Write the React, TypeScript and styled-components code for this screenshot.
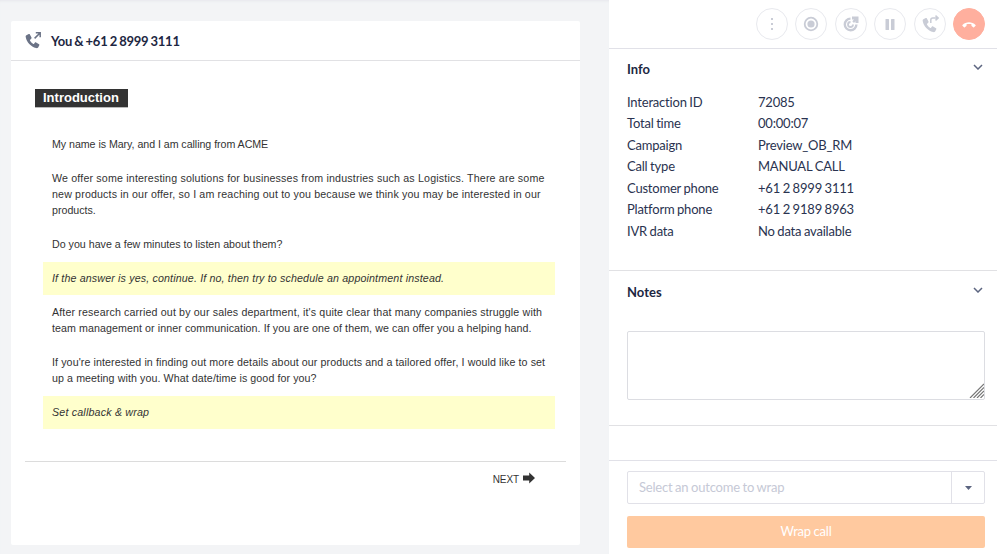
import React from 'react';
import styled, { createGlobalStyle } from 'styled-components';

const GlobalStyle = createGlobalStyle`
  html, body {
    margin: 0;
    padding: 0;
    height: 100%;
    overflow: hidden;
    font-family: Lato, "Liberation Sans", sans-serif;
    background: #f3f4f6;
  }
`;

const infoRows = [
  ['Interaction ID', '72085'],
  ['Total time', '00:00:07'],
  ['Campaign', 'Preview_OB_RM'],
  ['Call type', 'MANUAL CALL'],
  ['Customer phone', '+61 2 8999 3111'],
  ['Platform phone', '+61 2 9189 8963'],
  ['IVR data', 'No data available'],
];

const PhoneIcon = ({ size = 16, color = '#6b7386' }: { size?: number; color?: string }) => (
  <svg width={size} height={size} viewBox="0 0 18 18" fill={color}>
    <path d="M4.2 1.2 1.6 2.4C.9 2.8.6 3.6.8 4.6c1 5.8 5.800 11 11.600 12.400 1 .2 1.900 0 2.400-.8l1.300-2.300c.3-.5.1-1-.3-1.300l-3.300-2c-.5-.3-1-.2-1.300.2l-1 1.300c-.2.3-.5.3-.8.2-1.600-.9-3-2.400-3.800-4-.1-.3 0-.6.2-.8l1.200-1c.4-.3.5-.9.3-1.300L5.500 1.600c-.3-.5-.8-.6-1.300-.4Z" />
  </svg>
);

const Chevron = () => (
  <ChevronMark width="10" height="6" viewBox="0 0 10 6" fill="none" stroke="#5c6580" strokeWidth="1.500">
    <path d="M1 1l4 4 4-4" />
  </ChevronMark>
);

const App: React.FC = () => {
  return (
    <>
      <GlobalStyle />
      <Page>
        <ScriptArea>
          <Card>
            <CardHeader>
              <CallIcon>
                <PhoneIcon />
                <svg width="7" height="7" viewBox="0 0 7 7" fill="none" stroke="#6b7386" strokeWidth="1.500">
                  <path d="M.6 6.400 6 1M1.800.8h4.400v4.400" />
                </svg>
              </CallIcon>
              <CardTitle>You &amp; +61 2 8999 3111</CardTitle>
            </CardHeader>
            <ScriptBody>
              <SectionTag>Introduction</SectionTag>
              <Paragraphs>
                <Line>
                  <Row $tracking={-0.05}>My name is Mary, and I am calling from ACME</Row>
                </Line>
                <Line>
                  <Row $tracking={0.17}>We offer some interesting solutions for businesses from industries such as Logistics. There are some</Row>
                  <Row $tracking={0.15}>new products in our offer, so I am reaching out to you because we think you may be interested in our</Row>
                  <Row>products.</Row>
                </Line>
                <Line>
                  <Row>Do you have a few minutes to listen about them?</Row>
                </Line>
                <Hint>
                  <Row $tracking={0.15}>If the answer is yes, continue. If no, then try to schedule an appointment instead.</Row>
                </Hint>
                <Line>
                  <Row $tracking={0.145}>After research carried out by our sales department, it's quite clear that many companies struggle with</Row>
                  <Row $tracking={0.08}>team management or inner communication. If you are one of them, we can offer you a helping hand.</Row>
                </Line>
                <Line>
                  <Row $tracking={0.1}>If you're interested in finding out more details about our products and a tailored offer, I would like to set</Row>
                  <Row $tracking={0.085}>up a meeting with you. What date/time is good for you?</Row>
                </Line>
                <Hint>
                  <Row $tracking={0.19}>Set callback &amp; wrap</Row>
                </Hint>
              </Paragraphs>
            </ScriptBody>
            <CardFooter>
              <NextLink>
                <NextLabel>NEXT</NextLabel>
                <svg width="12" height="12" viewBox="0 0 12 12" fill="#333">
                  <path d="M0 3.500h6.200V.500L12 6l-5.800 5.500v-3H0Z" />
                </svg>
              </NextLink>
            </CardFooter>
          </Card>
        </ScriptArea>

        <SidePanel>
          <Toolbar>
            <RoundButton>
              <svg width="4" height="14" viewBox="0 0 4 14" fill="#c9ccd6">
                <rect x="1" y="1" width="2" height="2" />
                <rect x="1" y="6" width="2" height="2" />
                <rect x="1" y="11" width="2" height="2" />
              </svg>
            </RoundButton>
            <RoundButton>
              <svg width="16" height="16" viewBox="0 0 16 16" fill="none">
                <circle cx="8" cy="8" r="6.300" stroke="#c9ccd6" strokeWidth="1.800" />
                <circle cx="8" cy="8" r="3.600" fill="#c9ccd6" />
              </svg>
            </RoundButton>
            <RoundButton>
              <svg width="16" height="16" viewBox="0 0 16 16" fill="none">
                <path d="M7.500 2.600A5.800 5.800 0 1 0 13.400 8.500" stroke="#c9ccd6" strokeWidth="2.400" />
                <path d="M7.500 6A2.500 2.500 0 1 0 10 8.500" stroke="#c9ccd6" strokeWidth="1.800" />
                <path d="M9 .5h6.500V7h-3V5.300L11 7 9.300 5.300 11 3.500H9Z" fill="#c9ccd6" />
              </svg>
            </RoundButton>
            <RoundButton>
              <svg width="10" height="11" viewBox="0 0 10 11" fill="#c9ccd6">
                <rect x="0.5" y="0" width="3.500" height="11" rx=".5" />
                <rect x="6" y="0" width="3.500" height="11" rx=".5" />
              </svg>
            </RoundButton>
            <RoundButton>
              <TransferIcon>
                <PhoneIcon size={16} color="#c9ccd6" />
                <svg width="9" height="9" viewBox="0 0 9 9" fill="none" stroke="#c9ccd6" strokeWidth="1.500">
                  <path d="M5.500.6 8.200 3 5.500 5.400M8 3H2.800C1.500 3 .8 3.800.8 5v3" />
                </svg>
              </TransferIcon>
            </RoundButton>
            <HangupButton>
              <svg width="14" height="7" viewBox="0 0 16 8" fill="#fff">
                <path d="M.5 4.500C4.500.5 11.500.5 15.500 4.500c.3.300.3.700 0 1L13.800 7.200c-.3.300-.7.300-1 0L11 5.700c-.2-.2-.2-.4-.2-.6V3.800c-1.800-.6-3.800-.6-5.600 0v1.300c0 .2 0 .4-.2.600L3.200 7.200c-.3.300-.7.300-1 0L.5 5.500c-.3-.3-.3-.7 0-1Z" />
              </svg>
            </HangupButton>
          </Toolbar>

          <InfoSection>
            <SectionHead>
              <SectionTitle>Info</SectionTitle>
              <Chevron />
            </SectionHead>
            <InfoGrid>
              {infoRows.map(([label, value]) => (
                <React.Fragment key={label}>
                  <span>{label}</span>
                  <span>{value}</span>
                </React.Fragment>
              ))}
            </InfoGrid>
          </InfoSection>

          <NotesSection>
            <SectionHead>
              <SectionTitle>Notes</SectionTitle>
              <Chevron />
            </SectionHead>
            <NotesWrap>
              <NotesBox />
              <ResizeGrip width="15" height="15" viewBox="0 0 15 15" stroke="#777" strokeWidth="1.200">
                <path d="M1 15 15 1M4.500 15 15 4.500M8 15l7-7M11.500 15l3.500-3.500" />
              </ResizeGrip>
            </NotesWrap>
          </NotesSection>

          <Spacer />

          <WrapFooter>
            <OutcomeSelect>
              <OutcomeText>Select an outcome to wrap</OutcomeText>
              <OutcomeCaret>
                <svg width="7" height="4" viewBox="0 0 7 4" fill="#5c6580">
                  <path d="M0 0h7L3.500 4Z" />
                </svg>
              </OutcomeCaret>
            </OutcomeSelect>
            <WrapButton>Wrap call</WrapButton>
          </WrapFooter>
        </SidePanel>
      </Page>
    </>
  );
};

export default App;

const Page = styled.div`
  display: flex;
  width: 997px;
  height: 554px;
  background: #f3f4f6;
`;

const ScriptArea = styled.div`
  width: 609px;
  padding: 21px 29px 9px 11px;
  box-sizing: border-box;
  box-shadow: inset 0 3px 3px -2px #e6e7ec;
`;

const Card = styled.div`
  height: 524px;
  background: #fff;
  border-radius: 2px;
  display: flex;
  flex-direction: column;
`;

const CardHeader = styled.div`
  height: 40px;
  box-sizing: border-box;
  display: flex;
  align-items: center;
  padding-left: 14px;
  border-bottom: 1px solid #e1e1e4;
`;

const CallIcon = styled.div`
  position: relative;
  width: 16px;
  height: 16px;
  margin-right: 10px;
  svg {
    display: block;
  }
  svg:last-child {
    position: absolute;
    top: -1px;
    right: 0;
  }
`;

const CardTitle = styled.div`
  font-size: 13px;
  font-weight: 700;
  letter-spacing: -0.25px;
  word-spacing: -0.7px;
  color: #1d2742;
`;

const ScriptBody = styled.div`
  flex: 1;
  padding: 28px 24px 0;
  font-family: "Liberation Sans", Arial, sans-serif;
`;

const SectionTag = styled.div`
  display: block;
  width: fit-content;
  height: 19px;
  padding: 0 9px 0 8px;
  background: #333;
  color: #fff;
  font-size: 13px;
  font-weight: 700;
  line-height: 18px;
  border-bottom: 1px solid #bbb;
  box-sizing: border-box;
  margin-bottom: 28px;
`;

const Paragraphs = styled.div`
  display: flex;
  flex-direction: column;
  gap: 18px;
  margin-left: 8px;
  margin-right: 1px;
`;

const Line = styled.p`
  margin: 0;
  padding: 0 9px;
  font-size: 10.670px;
  line-height: 16px;
  color: #333;
`;

const Row = styled.span<{ $tracking?: number }>`
  display: block;
  white-space: nowrap;
  letter-spacing: ${({ $tracking }) => $tracking ?? 0}px;
`;

const Hint = styled(Line)`
  padding: 8px 9px 9px;
  margin: -8px 0 -9px;
  font-style: italic;
  background: #ffffcc;
`;

const CardFooter = styled.div`
  margin: 0 14px;
  height: 84px;
  box-sizing: border-box;
  padding: 8px 31px 0 0;
  border-top: 1px solid #dcdcdc;
  display: flex;
  justify-content: flex-end;
  align-items: flex-start;
`;

const NextLink = styled.div`
  display: flex;
  align-items: flex-start;
  gap: 4px;
  font-family: "Liberation Sans", Arial, sans-serif;
  font-size: 10px;
  line-height: 14px;
  color: #333;

  svg {
    margin-top: 2px;
  }
`;

const NextLabel = styled.span`
  padding-top: 3px;
  letter-spacing: -0.1px;
`;

const SidePanel = styled.div`
  width: 388px;
  background: #fff;
  display: flex;
  flex-direction: column;
  color: #1d2742;
`;

const Toolbar = styled.div`
  height: 49px;
  box-sizing: border-box;
  border-bottom: 1px solid #e1e1e8;
  display: flex;
  justify-content: flex-end;
  align-items: flex-start;
  padding: 8px 12px 0 0;
  gap: 7.400px;
`;

const RoundButton = styled.div`
  width: 32px;
  height: 32px;
  box-sizing: border-box;
  border: 1px solid #e8e9ee;
  border-radius: 50%;
  display: flex;
  align-items: center;
  justify-content: center;
`;

const HangupButton = styled(RoundButton)`
  background: #ffaf9e;
  border-color: #ffaf9e;
`;

const TransferIcon = styled.div`
  position: relative;
  width: 16px;
  height: 16px;
  top: 1px;
  svg:last-child {
    position: absolute;
    top: -2px;
    right: -1px;
  }
`;

const SectionHead = styled.div`
  display: flex;
  justify-content: space-between;
  align-items: flex-start;
`;

const ChevronMark = styled.svg`
  margin: 3px 2px 0 0;
`;

const SectionTitle = styled.div`
  font-size: 13px;
  font-weight: 700;
  line-height: 16px;
  color: #1d2742;
`;

const InfoSection = styled.div`
  height: 222px;
  box-sizing: border-box;
  padding: 12px 12px 0 18px;
  border-bottom: 1px solid #e1e1e4;
`;

const InfoGrid = styled.div`
  margin-top: 14.500px;
  display: grid;
  grid-template-columns: 131px 1fr;
  grid-auto-rows: 21.500px;
  font-size: 13px;
  letter-spacing: -0.2px;
  word-spacing: -0.5px;
  line-height: 21.500px;
  color: #2a3350;
`;

const NotesSection = styled.div`
  height: 155px;
  box-sizing: border-box;
  padding: 13px 12px 0 18px;
  border-bottom: 1px solid #e1e1e4;
`;

const NotesWrap = styled.div`
  position: relative;
  margin-top: 31px;
`;

const NotesBox = styled.textarea`
  display: block;
  width: 100%;
  height: 69px;
  box-sizing: border-box;
  border: 1px solid #dcdde2;
  border-radius: 2px;
  outline: none;
  resize: none;
`;

const ResizeGrip = styled.svg`
  position: absolute;
  right: 1px;
  bottom: 2px;
`;

const Spacer = styled.div`
  height: 35px;
  box-sizing: border-box;
  border-bottom: 1px solid #e1e1e8;
`;

const WrapFooter = styled.div`
  flex: 1;
  padding: 10px 12px 0 18px;
  display: flex;
  flex-direction: column;
  gap: 12px;
`;

const OutcomeSelect = styled.div`
  height: 33px;
  box-sizing: border-box;
  border: 1px solid #e1e1e8;
  border-radius: 2px;
  display: flex;
`;

const OutcomeText = styled.div`
  flex: 1;
  padding-left: 11px;
  font-size: 13px;
  letter-spacing: -0.2px;
  word-spacing: -0.5px;
  line-height: 31px;
  color: #c6c9d6;
`;

const OutcomeCaret = styled.div`
  width: 33px;
  box-sizing: border-box;
  border-left: 1px solid #e1e1e8;
  display: flex;
  align-items: center;
  justify-content: center;
`;

const WrapButton = styled.div`
  height: 32px;
  border-radius: 2px;
  background: #ffc99f;
  color: #fff;
  text-align: center;
  font-size: 13px;
  letter-spacing: -0.2px;
  word-spacing: -0.5px;
  line-height: 31px;
`;
